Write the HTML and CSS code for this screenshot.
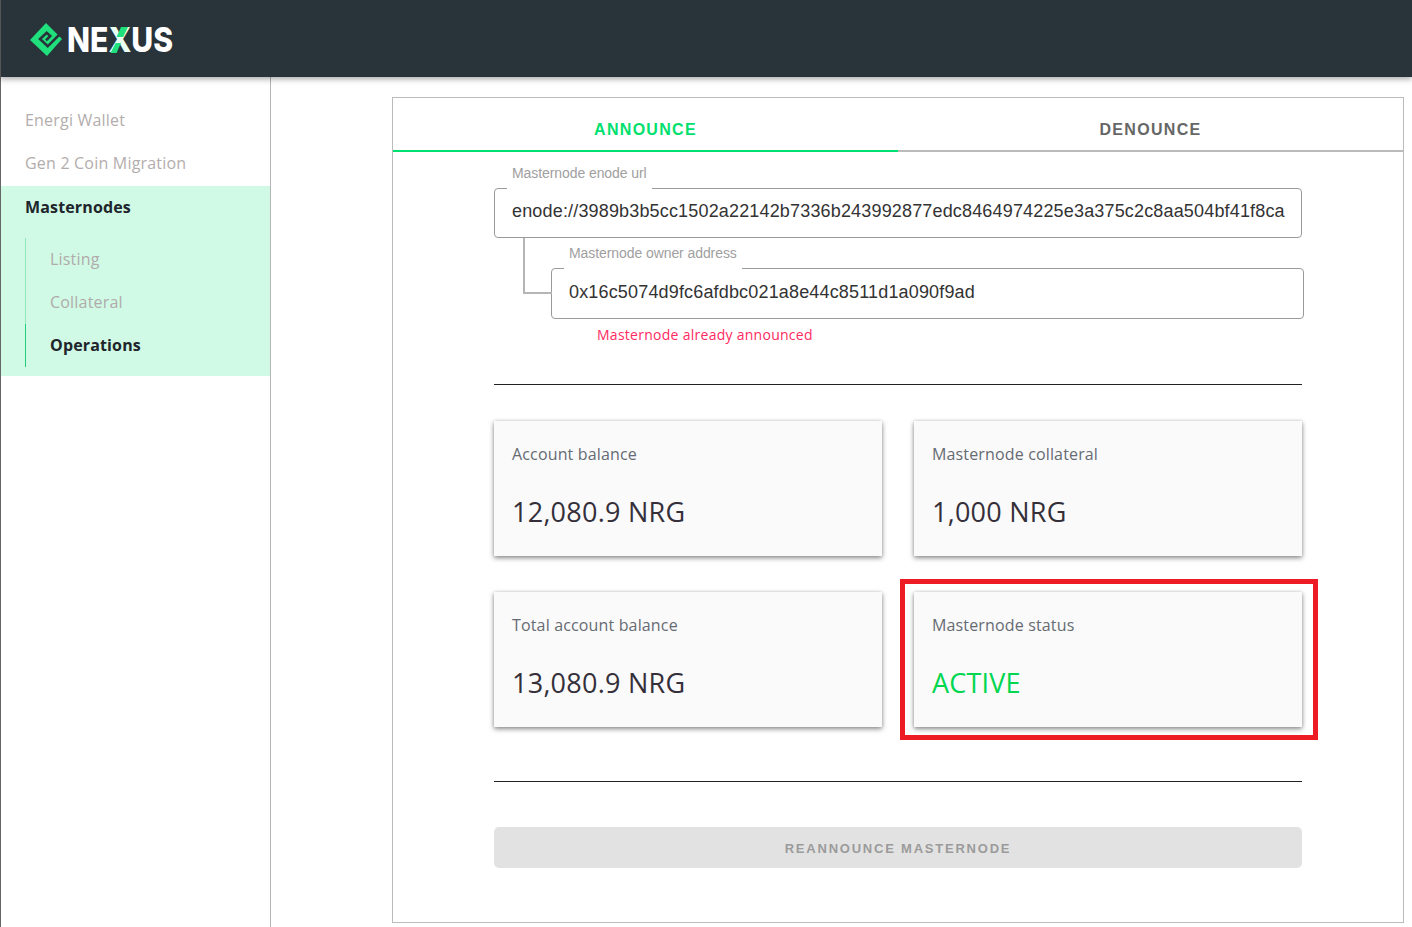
FILE: index.html
```html
<!DOCTYPE html>
<html lang="en">
<head>
<meta charset="utf-8">
<title>Nexus</title>
<link rel="stylesheet" href="styles.css">
</head>
<body>
<header class="topbar">
  <div class="logo">
    <svg class="logo-mark" width="33" height="33" viewBox="0 0 33 33">
      <path fill="#1fe07c" d="M16 0 L32 16 L17 33 L0 17 Z"/>
      <path fill="none" stroke="#28333a" stroke-width="2.6" stroke-linecap="butt" stroke-linejoin="miter" d="M29 12 L17.7 23.3 L10 16 L16.7 9.7 L20.3 13 L16 17.4"/>
    </svg>
    <span class="logo-word">NE<span class="logo-x">X<svg class="logo-slash" width="22" height="27" viewBox="0 0 22 27"><path fill="#1fe07c" d="M13 0 H21 L15.500 10 H8 Z"/><path fill="#1fe07c" d="M7 16 H13 L8 26 H1 Z"/></svg></span>US</span>
  </div>
</header>
<div class="layout">
  <nav class="sidebar">
    <a class="nav-item">Energi Wallet</a>
    <a class="nav-item">Gen 2 Coin Migration</a>
    <div class="nav-group">
      <a class="nav-item nav-item-active">Masternodes</a>
      <div class="subnav">
        <a class="subnav-item">Listing</a>
        <a class="subnav-item">Collateral</a>
        <a class="subnav-item subnav-item-active">Operations</a>
      </div>
    </div>
  </nav>
  <main class="content">
    <section class="panel">
      <div class="tabs">
        <div class="tab tab-active">ANNOUNCE</div>
        <div class="tab">DENOUNCE</div>
      </div>
      <div class="panel-body">
        <div class="field">
          <span class="field-label">Masternode enode url</span>
          <div class="field-value">enode://3989b3b5cc1502a22142b7336b243992877edc8464974225e3a375c2c8aa504bf41f8ca</div>
        </div>
        <div class="field field-child">
          <span class="connector"></span>
          <span class="field-label">Masternode owner address</span>
          <div class="field-value">0x16c5074d9fc6afdbc021a8e44c8511d1a090f9ad</div>
        </div>
        <p class="field-error">Masternode already announced</p>
        <hr class="rule rule-first">
        <div class="cards">
          <div class="card">
            <div class="card-label">Account balance</div>
            <div class="card-value">12,080.9 NRG</div>
          </div>
          <div class="card">
            <div class="card-label">Masternode collateral</div>
            <div class="card-value">1,000 NRG</div>
          </div>
          <div class="card">
            <div class="card-label">Total account balance</div>
            <div class="card-value">13,080.9 NRG</div>
          </div>
          <div class="card card-highlighted">
            <div class="card-label">Masternode status</div>
            <div class="card-value card-value-active">ACTIVE</div>
          </div>
        </div>
        <hr class="rule rule-second">
        <button class="action" disabled>REANNOUNCE MASTERNODE</button>
      </div>
    </section>
  </main>
</div>
</body>
</html>
```

FILE: styles.css
```css
* { box-sizing: border-box; }
html, body { margin: 0; padding: 0; height: 100%; }
body {
  width: 1412px;
  height: 927px;
  overflow: hidden;
  background: #fff;
  font-family: "Open Sans", sans-serif;
  display: flex;
  flex-direction: column;
}
.topbar {
  height: 77px;
  flex: none;
  background: #28333a;
  display: flex;
  align-items: center;
  padding: 2px 0 0 29px;
  box-shadow: 0 2px 6px rgba(0,0,0,.35);
  position: relative;
  z-index: 2;
  border-left: 1px solid #555;
}
.logo { display: flex; align-items: center; gap: 4px; }
.logo-mark { display: block; }
.logo-word {
  font-family: Inter, "Liberation Sans", sans-serif;
  font-weight: 800;
  font-size: 34px;
  line-height: 36px;
  color: #fff;
  display: inline-block;
  transform: scaleX(.885);
  transform-origin: left center;
}
.logo-x { position: relative; display: inline-block; color: #eafff3; }
.logo-slash { position: absolute; left: 1px; top: 5px; }
.layout { flex: 1; display: flex; min-height: 0; }
.sidebar {
  width: 271px;
  flex: none;
  border-left: 1px solid #666;
  border-right: 1px solid #b5b5b5;
  padding-top: 22px;
}
.nav-item {
  display: block;
  height: 43px;
  line-height: 43px;
  padding-left: 24px;
  font-size: 16px;
  letter-spacing: .2px;
  color: #b3adad;
}
.nav-group {
  background: #d0fae5;
  height: 190px;
  margin-top: 1px;
}
.nav-item-active { color: #20252b; font-weight: 700; letter-spacing: .15px; }
.subnav {
  margin: 9px 0 0 24px;
  border-left: 1px solid #8fe9bb;
}
.subnav-item {
  display: block;
  height: 43px;
  line-height: 43px;
  padding-left: 24px;
  font-size: 16px;
  letter-spacing: .2px;
  color: #b0abab;
}
.subnav-item-active {
  color: #20252b;
  font-weight: 700;
  letter-spacing: .15px;
  margin-left: -1px;
  padding-left: 24px;
  border-left: 1px solid #22cf78;
}
.content { flex: 1; padding: 20px 8px 4px 121px; min-width: 0; }
.panel { height: 826px; border: 1px solid #bbb; }
.tabs { display: flex; height: 54px; }
.tab {
  flex: 1;
  text-align: center;
  font-family: "Liberation Sans", sans-serif;
  font-weight: 700;
  font-size: 16px;
  letter-spacing: 1.3px;
  line-height: 63px;
  color: #666;
  border-bottom: 2px solid #bbb;
}
.tab-active { color: #00e06e; border-bottom-color: #00e06e; }
.panel-body { padding: 36px 101px 0; }
.field {
  position: relative;
  height: 50px;
  border: 1px solid #9b9b9b;
  border-radius: 4px;
}
.field-label {
  position: absolute;
  left: 12px;
  top: -27px;
  padding: 0 5px;
  height: 28px;
  line-height: 22px;
  background: #fff;
  font-family: "Liberation Sans", sans-serif;
  font-size: 14px;
  letter-spacing: -.08px;
  color: #a0a0a0;
}
.field-value {
  padding-left: 17px;
  line-height: 44px;
  font-family: "Liberation Sans", sans-serif;
  font-size: 18px;
  letter-spacing: .165px;
  color: #333;
  white-space: nowrap;
}
.field-child { margin: 30px -2px 0 57px; height: 51px; }
.field-child .field-value { line-height: 46px; }
.connector {
  position: absolute;
  left: -29px;
  top: -31px;
  width: 29px;
  height: 56px;
  border-left: 2px solid #b5b5b5;
  border-bottom: 2px solid #b5b5b5;
}
.field-error {
  margin: 6px 0 0 103px;
  font-size: 14px;
  line-height: 20px;
  letter-spacing: .27px;
  color: #ff2a5f;
}
.rule { border: 0; border-top: 1px solid #222; margin: 0; }
.rule-first { margin-top: 39px; }
.rule-second { margin-top: 54px; }
.cards {
  margin-top: 36px;
  display: grid;
  grid-template-columns: 388px 388px;
  grid-auto-rows: 135px;
  column-gap: 32px;
  row-gap: 36px;
}
.card {
  position: relative;
  background: #fafafa;
  padding: 22px 18px;
  box-shadow: 0 2px 5px rgba(0,0,0,.45), 0 0 3px rgba(0,0,0,.12);
}
.card-highlighted::after {
  content: "";
  position: absolute;
  left: -14px;
  right: -16px;
  top: -13px;
  bottom: -13px;
  border: 5px solid #ed1c24;
  pointer-events: none;
}
.card-label { font-size: 16px; line-height: 22px; letter-spacing: .15px; color: #666b73; }
.card-value { margin-top: 28px; font-size: 27px; line-height: 38px; letter-spacing: .25px; color: #352f3a; }
.card-value-active { color: #00d650; letter-spacing: .2px; }
.action {
  display: block;
  width: 100%;
  height: 41px;
  margin-top: 45px;
  padding: 2px 0 0;
  border: 0;
  border-radius: 5px;
  background: #e2e2e2;
  font-family: "Liberation Sans", sans-serif;
  font-weight: 700;
  font-size: 13px;
  letter-spacing: 1.78px;
  color: #9b9b9b;
}
```
